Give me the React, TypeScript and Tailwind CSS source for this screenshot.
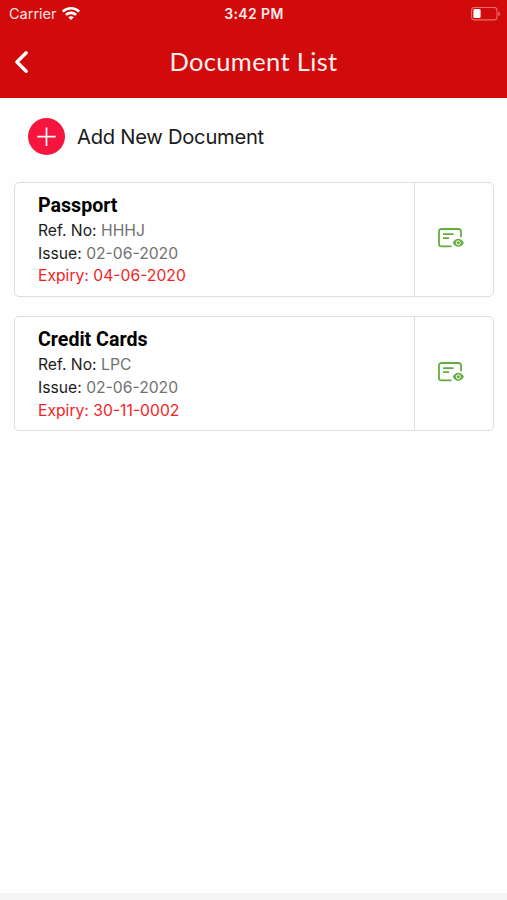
type Doc = {
  title: string;
  refNo: string;
  issue: string;
  expiry: string;
};

const documents: Doc[] = [
  { title: "Passport", refNo: "HHHJ", issue: "02-06-2020", expiry: "04-06-2020" },
  { title: "Credit Cards", refNo: "LPC", issue: "02-06-2020", expiry: "30-11-0002" },
];

const WifiIcon = () => (
  <svg className="h-[14px] w-[18px]" viewBox="0 0 18 14" fill="none" stroke="#fff" strokeWidth="2.6">
    <path d="M.8 4.6C5.4.2 12.6.2 17.2 4.6" />
    <path d="M3.9 7.9c2.9-2.7 7.3-2.7 10.2 0" />
    <path d="M9 13 6.2 10.3c1.5-1.4 4.1-1.4 5.6 0Z" fill="#fff" stroke="none" />
  </svg>
);

const BatteryIcon = () => (
  <svg className="h-[14px] w-[30px]" viewBox="0 0 30 14" fill="none">
    <rect x="0.6" y="0.5" width="25.4" height="12.4" rx="3" stroke="#f0686a" strokeWidth="1.1" />
    <rect x="2.4" y="2.1" width="7.2" height="9" rx="1.4" fill="#fff" />
    <path d="M27.4 4.4c2.4.9 2.4 3.9 0 4.8Z" fill="#f0686a" />
  </svg>
);

const ViewIcon = () => (
  <svg className="h-5 w-[26px]" viewBox="0 0 26 20" fill="none" stroke="#62ae3c" strokeWidth="1.8">
    <path
      d="M12.8 18.4H3.4A2.4 2.4 0 0 1 1 16V3.4A2.4 2.4 0 0 1 3.4 1h17.2A2.4 2.4 0 0 1 23 3.4v5.2"
      strokeLinecap="round"
    />
    <path d="M5 6.2h10.5M5 10.2h6" />
    <path d="M14.8 14.8c2.4-5.4 8.6-5.4 11 0c-2.4 5.4-8.6 5.4-11 0Z" fill="#62ae3c" stroke="none" />
    <circle cx="20.3" cy="14.8" r="2" stroke="#fff" strokeWidth="1" />
  </svg>
);

const DocumentCard = ({ doc }: { doc: Doc }) => (
  <div className="flex h-[115px] rounded-[5px] border border-[#dedede] bg-white">
    <div className="flex-1 pt-[10px] pl-[23px] text-[15.7px] leading-[22.7px] text-[#1c1c1c]">
      <h2 className="mb-[2.4px] font-[Roboto,sans-serif] text-[19.6px] leading-[25px] font-bold text-black">
        {doc.title}
      </h2>
      <p>
        Ref. No: <span className="text-[#717171]">{doc.refNo}</span>
      </p>
      <p>
        Issue: <span className="text-[#717171]">{doc.issue}</span>
      </p>
      <p className="text-[#f5221f]">Expiry: {doc.expiry}</p>
    </div>
    <button className="flex w-[79px] items-center justify-center border-l border-[#dedede] pr-[6px] pb-[2px]">
      <ViewIcon />
    </button>
  </div>
);

export default function App() {
  return (
    <div className="flex h-[900px] w-[507px] flex-col bg-[#fefefe] font-[Inter,sans-serif]">
      <header className="h-[98px] bg-[#d10a0b] text-white">
        <div className="grid h-[27px] grid-cols-3 items-center pr-[6px] pl-[9px]">
          <div className="flex items-center gap-[5px]">
            <span className="text-[14.5px] text-[#ffe3e3]">Carrier</span>
            <WifiIcon />
          </div>
          <span className="pr-[2px] text-center text-[14px] font-semibold tracking-[0.4px] text-[#ffe9e9]">3:42 PM</span>
          <div className="flex justify-end">
            <BatteryIcon />
          </div>
        </div>
        <div className="grid h-[70px] grid-cols-[40px_1fr_40px] items-center">
          <button className="pl-[14px]">
            <svg
              className="h-6 w-4"
              viewBox="0 0 16 24"
              fill="none"
              stroke="#fff"
              strokeWidth="3.4"
              strokeLinecap="round"
              strokeLinejoin="round"
            >
              <path d="M12.2 2.8 2.9 12l9.3 9.2" />
            </svg>
          </button>
          <h1 className="pb-[2px] text-center font-[Lato,sans-serif] text-[25.5px] tracking-[0.35px] text-[#fff0f0]">
            Document List
          </h1>
        </div>
      </header>

      <main className="flex-1 pt-5 pr-[13px] pl-[14px]">
        <button className="ml-[14px] flex items-center gap-[12px]">
          <span className="flex size-[37px] items-center justify-center rounded-full bg-[#f5163f]">
            <svg className="size-5" viewBox="0 0 20 20" stroke="#fff" strokeWidth="1.7">
              <path d="M9.5.5v18.4M.3 9.7h18.4" />
            </svg>
          </span>
          <span className="pt-[2px] text-[20.2px] tracking-[-0.27px] text-[#1a1a1a]">Add New Document</span>
        </button>

        <div className="mt-[26.6px] flex flex-col gap-[19.4px]">
          {documents.map((doc) => (
            <DocumentCard key={doc.title} doc={doc} />
          ))}
        </div>
      </main>

      <footer className="h-[7px] bg-[#f5f5f5]" />
    </div>
  );
}
